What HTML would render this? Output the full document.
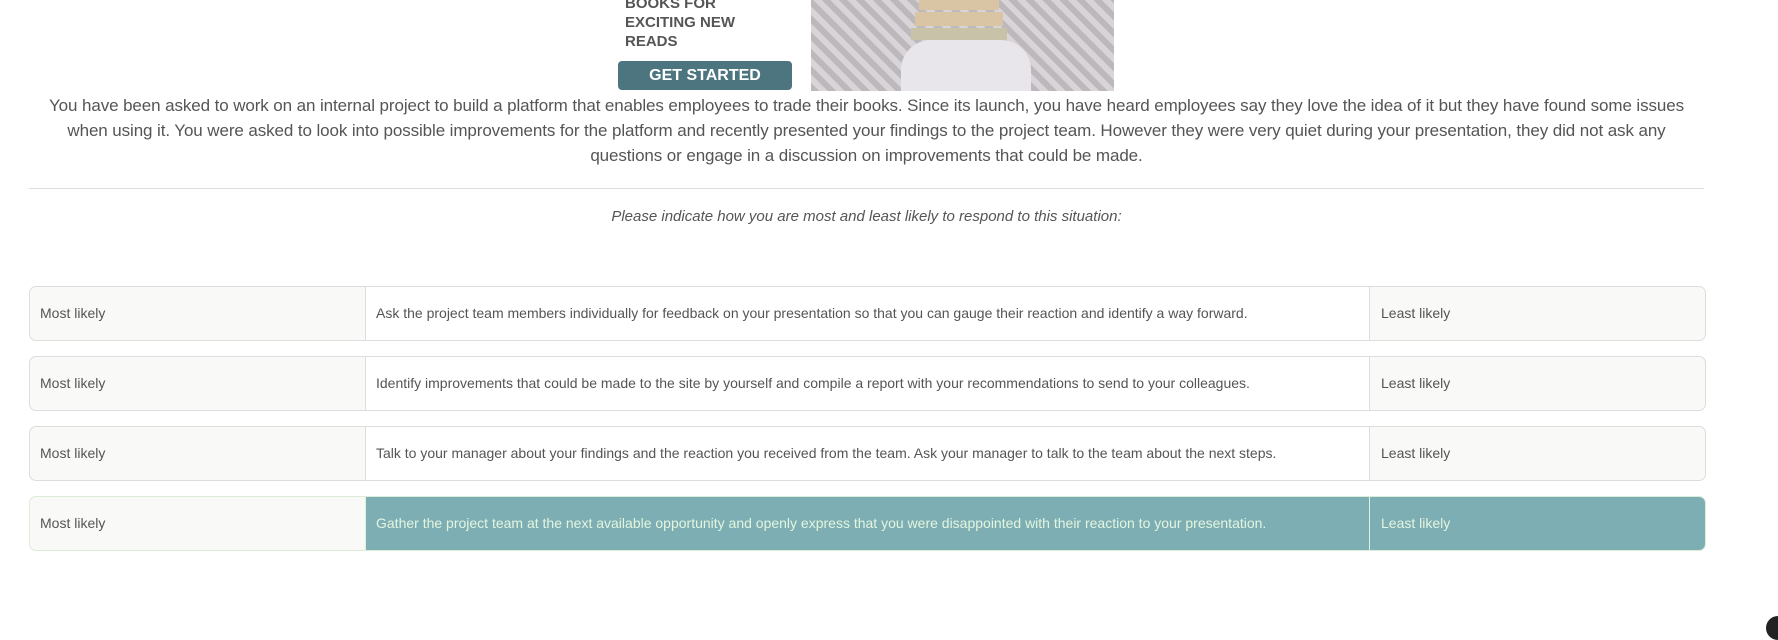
<!DOCTYPE html>
<html><head><meta charset="utf-8"><style>
body{margin:0;width:1778px;height:629px;background:#fff;position:relative;overflow:hidden;font-family:"Liberation Sans",sans-serif;color:#555}
.ad{position:absolute;left:625px;top:-6px;font:bold 15px/19px "Liberation Sans",sans-serif;color:#555}
.btn{position:absolute;left:618px;top:61px;width:174px;height:29px;background:#4d7580;border-radius:4px;color:#fff;font:bold 16px/29px "Liberation Sans",sans-serif;text-align:center}
.img{position:absolute;left:811px;top:0;width:303px;height:91px;background:repeating-linear-gradient(45deg,#bdb8bc 0 6px,#d8d4d7 6px 12px)}
.img .b{position:absolute;left:108px;width:80px;background:#d9c4a4}
.img .p{position:absolute;left:90px;top:40px;width:130px;height:51px;background:#e8e6ea;border-radius:30px 30px 0 0}
.para{position:absolute;left:29px;width:1675px;top:93px;text-align:center;font-size:17px;line-height:25px;letter-spacing:-0.1px;white-space:nowrap}
.hr{position:absolute;left:29px;width:1675px;top:188px;height:1px;background:#ddd}
.q{position:absolute;left:29px;width:1675px;top:208px;text-align:center;font-style:italic;font-size:15px}
.row{position:absolute;left:29px;width:1675px;height:53px;border:1px solid #ddd;border-radius:7px;overflow:hidden;background:#f9f9f8;font-size:14px}
.row div{position:absolute;top:0;height:53px;line-height:52px;box-sizing:border-box}
.c1{left:0;width:335px;padding-left:10px}
.c2{left:335px;width:1004px;padding-left:10px;border-left:1px solid #ddd;background:#fff}
.c3{left:1339px;width:336px;padding-left:11px;border-left:1px solid #ddd}
.sel .c2,.sel .c3{background:#7caeb3;color:#e4f5df;border-left-color:#dff0dc}
.sel{border-color:#dcecd8}
.dot{position:absolute;left:1766px;top:616px;width:24px;height:24px;border-radius:50%;background:#222}
</style></head><body>
<div class="ad">BOOKS FOR<br>EXCITING NEW<br>READS</div>
<div class="btn">GET STARTED</div>
<div class="img"><div class="p"></div><div class="b" style="top:0;height:10px"></div><div class="b" style="top:12px;height:14px;left:104px;width:88px"></div><div class="b" style="top:28px;height:12px;left:100px;width:96px;background:#c8c2a8"></div></div>
<div class="para">You have been asked to work on an internal project to build a platform that enables employees to trade their books. Since its launch, you have heard employees say they love the idea of it but they have found some issues<br>when using it. You were asked to look into possible improvements for the platform and recently presented your findings to the project team. However they were very quiet during your presentation, they did not ask any<br>questions or engage in a discussion on improvements that could be made.</div>
<div class="hr"></div>
<div class="q">Please indicate how you are most and least likely to respond to this situation:</div>
<div class="row" style="top:286px"><div class="c1">Most likely</div><div class="c2">Ask the project team members individually for feedback on your presentation so that you can gauge their reaction and identify a way forward.</div><div class="c3">Least likely</div></div>
<div class="row" style="top:356px"><div class="c1">Most likely</div><div class="c2">Identify improvements that could be made to the site by yourself and compile a report with your recommendations to send to your colleagues.</div><div class="c3">Least likely</div></div>
<div class="row" style="top:426px"><div class="c1">Most likely</div><div class="c2">Talk to your manager about your findings and the reaction you received from the team. Ask your manager to talk to the team about the next steps.</div><div class="c3">Least likely</div></div>
<div class="row sel" style="top:496px"><div class="c1">Most likely</div><div class="c2">Gather the project team at the next available opportunity and openly express that you were disappointed with their reaction to your presentation.</div><div class="c3">Least likely</div></div>
<div class="dot"></div>
</body></html>
